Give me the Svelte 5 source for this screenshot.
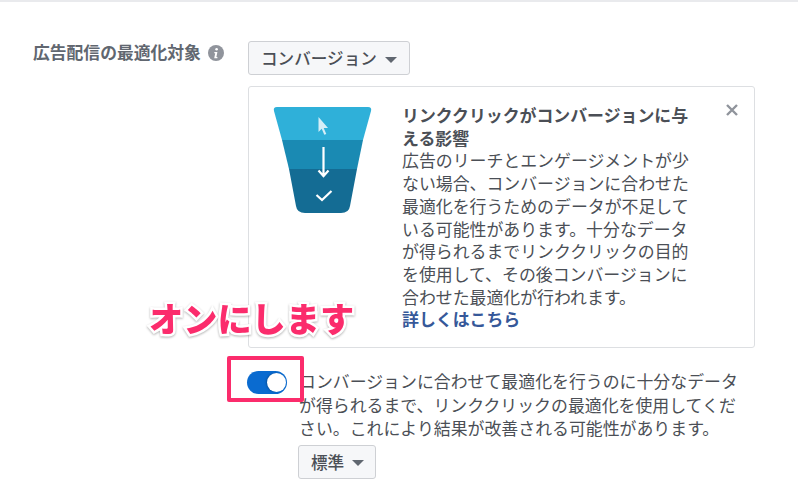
<script lang="ts">
	const bodyText =
		'広告のリーチとエンゲージメントが少ない場合、コンバージョンに合わせた最適化を行うためのデータが不足している可能性があります。十分なデータが得られるまでリンククリックの目的を使用して、その後コンバージョンに合わせた最適化が行われます。';
	const toggleText =
		'コンバージョンに合わせて最適化を行うのに十分なデータが得られるまで、リンククリックの最適化を使用してください。これにより結果が改善される可能性があります。';
</script>

<div class="page">
	<div class="row">
		<div class="label">
			<span>広告配信の最適化対象</span>
			<svg class="info" width="16" height="16" viewBox="0 0 16 16">
				<circle cx="8" cy="8" r="8" fill="#90949c" />
				<circle cx="8.6" cy="4.2" r="1.3" fill="#fff" />
				<path d="M6.4 7h3l-1 5h1v1.200h-3.200l1-5h-1z" fill="#fff" />
			</svg>
		</div>

		<div class="main">
			<button class="select wide">
				<span>コンバージョン</span>
				<span class="caret"></span>
			</button>

			<div class="card">
				<svg class="funnel" width="100" height="108" viewBox="0 0 100 108">
					<path d="M4 0h91q4 0 3 4l-8 29H9L1 4q-1-4 3-4z" fill="#2fb0d9" />
					<path d="M9 33h81l-6 29H16z" fill="#1a8ab3" />
					<path d="M16 62h68l-7 37q-1 7-9 7H32q-8 0-9-7z" fill="#146c94" />
					<path d="M45.500 10v15l3.200-3.200 2.600 6 2-.9-2.600-5.800h4.300z" fill="#d6eef7" />
					<path d="M50.500 40v29M45.500 63.500l5 5.500 5-5.500" fill="none" stroke="#fff" stroke-width="2.200" />
					<path d="M43.500 88l5.500 5 9.500-9" fill="none" stroke="#fff" stroke-width="2.200" />
				</svg>

				<div class="copy">
					<strong>リンククリックがコンバージョンに与える影響</strong>
					<p>{bodyText}</p>
					<a href="#more">詳しくはこちら</a>
				</div>

				<svg class="close" width="12" height="12" viewBox="0 0 12 12">
					<path d="M1 1l10 10M11 1L1 11" stroke="#90949c" stroke-width="2.400" />
				</svg>
			</div>

			<div class="note">オンにします</div>

			<div class="toggle-row">
				<div class="toggle-box">
					<span class="track"><span class="thumb"></span></span>
					<span class="highlight"></span>
				</div>
				<div class="toggle-copy">
					<p>{toggleText}</p>
					<button class="select">
						<span>標準</span>
						<span class="caret"></span>
					</button>
				</div>
			</div>
		</div>
	</div>
</div>

<style>
	:global(body) {
		background: #fff;
	}

	.page {
		width: 798px;
		height: 504px;
		overflow: hidden;
		box-sizing: border-box;
		border-top: 2px solid #e9eaed;
		padding-top: 39px;
		font-family: "Noto Sans CJK JP", "Noto Sans", sans-serif;
		color: #4b4f56;
	}

	.row {
		display: flex;
	}

	.label {
		width: 248px;
		box-sizing: border-box;
		padding: 0 0 0 33px;
		margin-top: -1px;
		display: flex;
		align-items: flex-start;
		gap: 7px;
		font-size: 16.800px;
		font-weight: 700;
		line-height: 24px;
		color: #616770;
	}

	.info {
		margin-top: 5px;
	}

	.main {
		position: relative;
		width: 507px;
	}

	.select {
		display: flex;
		align-items: center;
		gap: 8px;
		height: 34px;
		box-sizing: border-box;
		padding: 0 11px 0 12px;
		background: #f6f7f9;
		border: 1px solid #ced0d4;
		border-radius: 3px;
		font: 500 16.600px "Noto Sans CJK JP", "Noto Sans", sans-serif;
		white-space: nowrap;
		color: #4b4f56;
	}

	.select.wide {
		width: 162px;
	}

	.caret {
		width: 0;
		height: 0;
		margin-top: 3px;
		border-left: 6px solid transparent;
		border-right: 6px solid transparent;
		border-top: 6.500px solid #606770;
	}

	.card {
		display: flex;
		align-items: flex-start;
		height: 262px;
		box-sizing: border-box;
		margin-top: 11px;
		padding: 20px 14px 0 24px;
		background: #fff;
		border: 1px solid #dddfe2;
		border-radius: 3px;
	}

	.funnel {
		flex: none;
	}

	.copy {
		width: 290px;
		margin: -3px 0 0 29px;
		font-size: 16.900px;
		line-height: 22.700px;
	}

	.copy strong {
		display: block;
		color: #4b4f56;
	}

	.copy p {
		margin: 0;
	}

	.copy a {
		font-weight: 700;
		color: #365899;
		text-decoration: none;
	}

	.close {
		flex: none;
		margin: 0 0 0 34px;
		position: relative;
		top: -3px;
	}

	.note {
		position: absolute;
		left: -99px;
		top: 254px;
		font-size: 34.200px;
		font-weight: 900;
		line-height: 44px;
		white-space: nowrap;
		color: #fb2c6c;
		-webkit-text-stroke: 5px #fff;
		paint-order: stroke fill;
		filter: drop-shadow(0 1px 1px rgba(0, 0, 0, 0.3));
	}

	.toggle-row {
		display: flex;
		margin-top: 20px;
	}

	.toggle-box {
		position: relative;
		flex: none;
		width: 52px;
		height: 24px;
		margin: 3px 0 0 -1px;
	}

	.track {
		display: block;
		width: 40px;
		height: 23px;
		border-radius: 12px;
		background: #0a6bd0;
		position: relative;
	}

	.thumb {
		position: absolute;
		top: 2px;
		right: 1px;
		width: 19px;
		height: 19px;
		border-radius: 50%;
		background: #fff;
		box-shadow: -1px 0 2px rgba(0, 0, 0, 0.25);
	}

	.highlight {
		position: absolute;
		left: -20px;
		top: -15px;
		width: 69px;
		height: 38px;
		border: 4px solid #fb2c6c;
		border-radius: 2px;
	}

	.toggle-copy {
		width: 450px;
		font-size: 16.900px;
		line-height: 23.500px;
		padding-top: 1px;
	}

	.toggle-copy p {
		margin: 0 0 5px;
	}

	.toggle-copy .select {
		margin-left: -1px;
	}
</style>
